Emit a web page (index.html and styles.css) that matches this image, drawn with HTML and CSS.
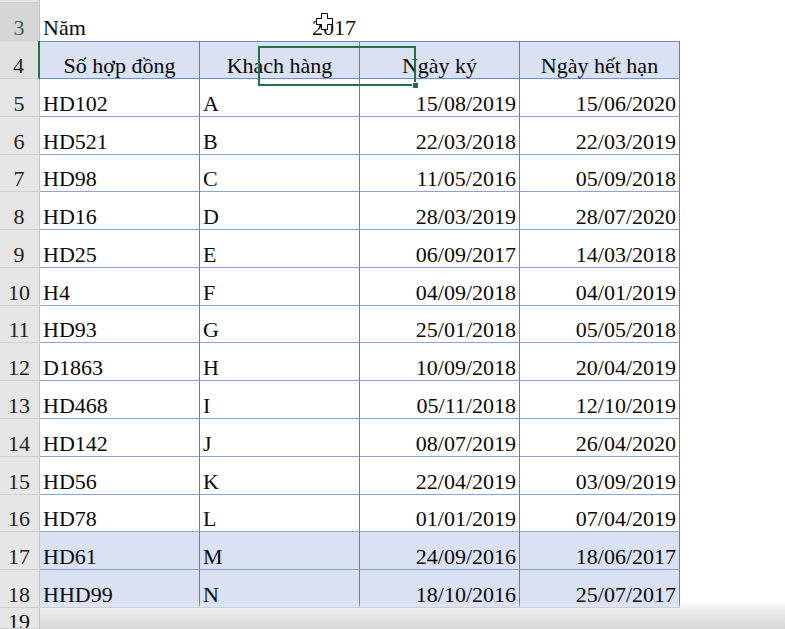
FILE: index.html
```html
<!DOCTYPE html>
<html lang="vi">
<head>
<meta charset="utf-8">
<title>Sheet</title>
<link rel="stylesheet" href="styles.css">
</head>
<body>
<div class="sheet">
  <div class="row r2"><div class="rh"></div></div>
  <div class="row r3">
    <div class="rh rh-sel">3</div>
    <div class="c">Năm</div>
    <div class="c right">2017</div>
    <div class="c"></div><div class="c"></div>
  </div>
  <div class="row r4">
    <div class="rh rh-active">4</div>
    <div class="c t th center">Số hợp đồng</div>
    <div class="c t th center">Khach hàng</div>
    <div class="c t th center">Ngày ký</div>
    <div class="c t th center">Ngày hết hạn</div>
  </div>
  <div class="row rd"><div class="rh">5</div><div class="c t">HD102</div><div class="c t">A</div><div class="c t right">15/08/2019</div><div class="c t right">15/06/2020</div></div>
  <div class="row rd"><div class="rh">6</div><div class="c t">HD521</div><div class="c t">B</div><div class="c t right">22/03/2018</div><div class="c t right">22/03/2019</div></div>
  <div class="row rd"><div class="rh">7</div><div class="c t">HD98</div><div class="c t">C</div><div class="c t right">11/05/2016</div><div class="c t right">05/09/2018</div></div>
  <div class="row rd"><div class="rh">8</div><div class="c t">HD16</div><div class="c t">D</div><div class="c t right">28/03/2019</div><div class="c t right">28/07/2020</div></div>
  <div class="row rd"><div class="rh">9</div><div class="c t">HD25</div><div class="c t">E</div><div class="c t right">06/09/2017</div><div class="c t right">14/03/2018</div></div>
  <div class="row rd"><div class="rh">10</div><div class="c t">H4</div><div class="c t">F</div><div class="c t right">04/09/2018</div><div class="c t right">04/01/2019</div></div>
  <div class="row rd"><div class="rh">11</div><div class="c t">HD93</div><div class="c t">G</div><div class="c t right">25/01/2018</div><div class="c t right">05/05/2018</div></div>
  <div class="row rd"><div class="rh">12</div><div class="c t">D1863</div><div class="c t">H</div><div class="c t right">10/09/2018</div><div class="c t right">20/04/2019</div></div>
  <div class="row rd"><div class="rh">13</div><div class="c t">HD468</div><div class="c t">I</div><div class="c t right">05/11/2018</div><div class="c t right">12/10/2019</div></div>
  <div class="row rd"><div class="rh">14</div><div class="c t">HD142</div><div class="c t">J</div><div class="c t right">08/07/2019</div><div class="c t right">26/04/2020</div></div>
  <div class="row rd"><div class="rh">15</div><div class="c t">HD56</div><div class="c t">K</div><div class="c t right">22/04/2019</div><div class="c t right">03/09/2019</div></div>
  <div class="row rd"><div class="rh">16</div><div class="c t">HD78</div><div class="c t">L</div><div class="c t right">01/01/2019</div><div class="c t right">07/04/2019</div></div>
  <div class="row rd band"><div class="rh">17</div><div class="c t">HD61</div><div class="c t">M</div><div class="c t right">24/09/2016</div><div class="c t right">18/06/2017</div></div>
  <div class="row rd band"><div class="rh">18</div><div class="c t">HHD99</div><div class="c t">N</div><div class="c t right">18/10/2016</div><div class="c t right">25/07/2017</div></div>
  <div class="row r19"><div class="rh">19</div></div>
</div>

<div class="selbox"><span class="handle"></span></div>

<svg class="cursor" width="17" height="17" viewBox="0 0 17 17">
  <path d="M5.5 0.5 H11.5 V5.5 H16.5 V11.5 H11.5 V16.5 H5.5 V11.5 H0.5 V5.5 H5.5 Z" fill="#fff" stroke="#000" stroke-width="1"/>
</svg>

<div class="shade"></div>
</body>
</html>
```

FILE: styles.css
```css
* { box-sizing: border-box; }

html, body {
  margin: 0;
  padding: 0;
  background: #fff;
  width: 785px;
  height: 629px;
  overflow: hidden;
}

body {
  font-family: "Liberation Serif", "Times New Roman", serif;
  font-size: 22px;
  color: #0a0a0a;
  position: relative;
}

.sheet {
  display: flex;
  flex-direction: column;
}

.row {
  display: grid;
  grid-template-columns: 40px 160px 160px 160px 160px 1fr;
}

.r2 { height: 3px; }
.r3 { height: 37.5px; }
.r4 { height: 38.5px; }
.rd { height: 37.79px; }
.r19 { height: 21px; }

.rh {
  background: #e6e6e6;
  border-right: 1px solid #c3c3c3;
  border-bottom: 1px solid #d0d0d0;
  display: flex;
  align-items: flex-end;
  justify-content: center;
  line-height: 25px;
  color: #222;
  padding-right: 1px;
}

.r19 .rh {
  align-items: flex-start;
  line-height: 25px;
  padding-top: 1px;
  overflow: hidden;
  color: #111;
}

.rh-sel {
  background: #d6d6d6;
  color: #3b6353;
}

.rh-active {
  background: #e0e0e0;
  border-right: 2px solid #217346;
}

.c {
  display: flex;
  align-items: flex-end;
  justify-content: flex-start;
  padding: 0 3px;
  line-height: 25px;
  white-space: nowrap;
  border-right: 1px solid transparent;
  border-bottom: 1px solid transparent;
}

.right { justify-content: flex-end; }
.center { justify-content: center; }

.t {
  border-right: 1px solid #5b7dbd;
  border-bottom: 1px solid #8aa3d3;
}

.th {
  background: #d9e1f2;
  border-top: 1px solid #6d8cc8;
  border-bottom-color: #6d8cc8;
}

.band .t { background: #d9e1f2; }

.selbox {
  position: absolute;
  left: 258px;
  top: 46px;
  width: 158px;
  height: 40px;
  border: 2px solid #217346;
}

.handle {
  position: absolute;
  right: -5px;
  bottom: -5px;
  width: 7px;
  height: 7px;
  background: #217346;
  border: 1px solid #fff;
}

.cursor {
  position: absolute;
  left: 316px;
  top: 13px;
}

.shade {
  position: absolute;
  left: 40px;
  right: 0;
  bottom: 0;
  height: 27px;
  background: linear-gradient(to bottom,
    rgba(225, 225, 225, 0) 0,
    rgba(232, 232, 232, 0.8) 7px,
    rgba(214, 214, 214, 0.95) 100%);
}
```
